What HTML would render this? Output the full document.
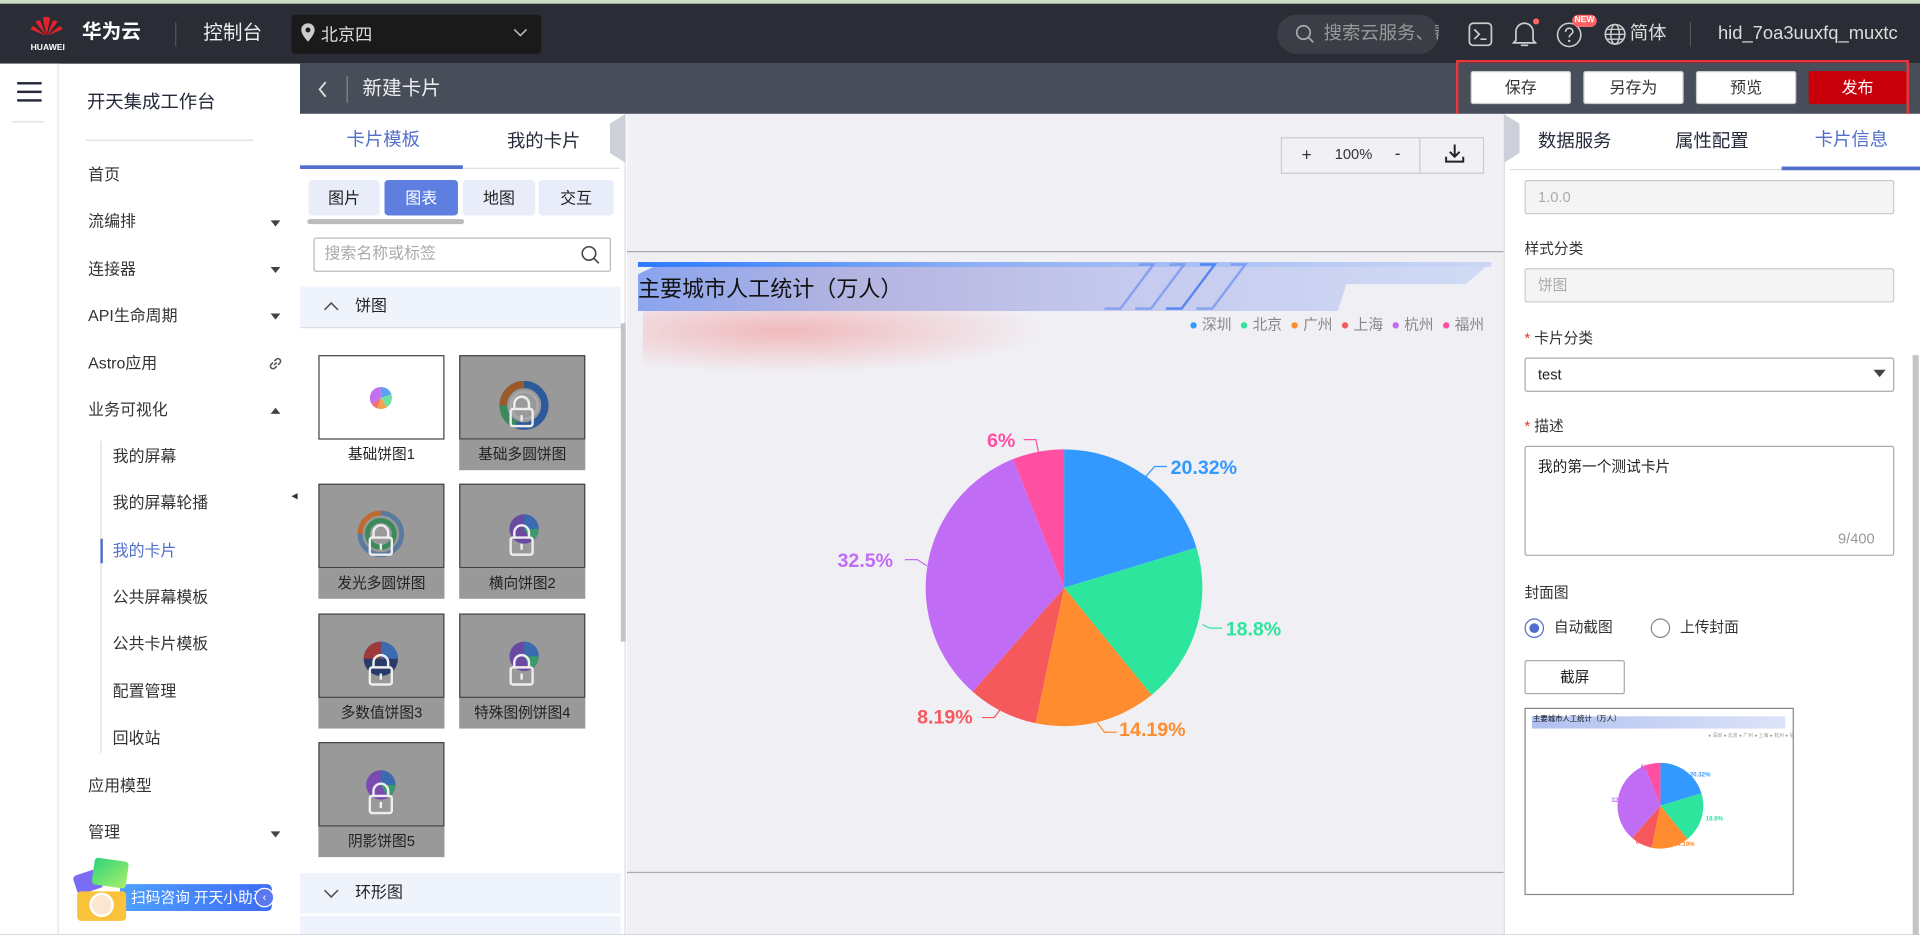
<!DOCTYPE html>
<html><head><meta charset="utf-8"><style>
*{box-sizing:border-box;margin:0;padding:0}
html,body{width:1920px;height:935px;overflow:hidden;background:#fff}
body{font-family:"Liberation Sans","Noto Sans CJK SC",sans-serif;}
#w{width:1568px;height:764px;transform:scale(1.22449);transform-origin:0 0;position:relative;overflow:hidden;background:#fff}
.a{position:absolute}
.t{position:absolute;white-space:nowrap;line-height:1.15}
.nav{font-size:13px;color:#333}
.tri{position:absolute;width:0;height:0;border-left:4px solid transparent;border-right:4px solid transparent;border-top:5px solid #444}
.btn{position:absolute;top:58px;height:27px;width:82px;background:#fff;border:1px solid #ccc;border-radius:2px;font-size:13px;color:#333;text-align:center;line-height:25px}
.th{position:absolute;width:103px;height:95px}
.th .b{position:absolute;left:0;top:0;width:103px;height:69px;border:1px solid #444;background:#fff}
.th .l{position:absolute;left:0;top:69px;width:103px;height:25px;text-align:center;line-height:25px;font-size:12px;color:#222}
.lk .b,.lk .l{background:#999}
.lock{position:absolute;left:41px;top:32px;width:20px;height:28px}
.in{position:absolute;left:1245px;width:302px;border:1px solid #ccc;border-radius:2px;font-size:12px;line-height:1.15}
.lab{position:absolute;left:1245px;font-size:12px;color:#333;line-height:1.15}
</style></head><body><div id="w">
<div class="a" style="left:0;top:0;width:1568px;height:3px;background:#c9dcc4"></div>
<div class="a" style="left:0;top:3px;width:1568px;height:49px;background:#2a2d35"></div>
<svg class="a" style="left:24px;top:13px" width="28" height="22" viewBox="0 0 28 22"><g fill="#e3222b"><path d="M14 16 L11 2 Q13 0 14 1Z"/><path d="M14 16 L17 2 Q15 0 14 1Z"/><path d="M13.5 16 L5 5 Q7 3 9 4Z"/><path d="M14.5 16 L23 5 Q21 3 19 4Z"/><path d="M13 16 L1 11 Q2 9 3 8Z"/><path d="M15 16 L27 11 Q26 9 25 8Z"/></g></svg>
<div class="t" style="left:25px;top:36px;font-size:7px;color:#fff;font-weight:bold">HUAWEI</div>
<div class="t" style="left:67px;top:18px;font-size:16px;color:#fff;font-weight:bold">华为云</div>
<div class="a" style="left:143px;top:18px;width:1px;height:20px;background:#555"></div>
<div class="t" style="left:166px;top:19px;font-size:16px;color:#eee">控制台</div>
<div class="a" style="left:238px;top:12px;width:204px;height:32px;background:#1a1a1a;border-radius:3px"></div>
<svg class="a" style="left:246px;top:19px" width="11" height="15" viewBox="0 0 11 15"><path d="M5.5 0C2.5 0 0 2.4 0 5.4 0 9.3 5.5 15 5.5 15S11 9.3 11 5.4C11 2.4 8.5 0 5.5 0zm0 7.5a2 2 0 110-4 2 2 0 010 4z" fill="#ccc"/></svg>
<div class="t" style="left:262px;top:20px;font-size:14px;color:#ddd">北京四</div>
<svg class="a" style="left:419px;top:23px" width="12" height="8"><path d="M1 1l5 5 5-5" stroke="#bbb" fill="none" stroke-width="1.3"/></svg>
<div class="a" style="left:1043px;top:12px;width:132px;height:32px;background:#3b3e46;border-radius:16px"></div>
<svg class="a" style="left:1058px;top:20px" width="15" height="16"><circle cx="6.5" cy="6.5" r="5.5" stroke="#aaa" stroke-width="1.4" fill="none"/><path d="M10.5 10.5l4 4" stroke="#aaa" stroke-width="1.4"/></svg>
<div class="t" style="left:1081px;top:19px;font-size:15px;color:#999;width:94px;overflow:hidden">搜索云服务、帮</div>
<svg class="a" style="left:1199px;top:18px" width="20" height="20"><rect x="1" y="1" width="18" height="18" rx="3" stroke="#ccc" stroke-width="1.4" fill="none"/><path d="M5 6l4 4-4 4M10 14h5" stroke="#ccc" stroke-width="1.4" fill="none"/></svg>
<svg class="a" style="left:1235px;top:16px" width="20" height="23"><path d="M3 17V10a7 7 0 0114 0v7l2 2H1z" stroke="#ccc" stroke-width="1.4" fill="none"/><path d="M7 21h6" stroke="#ccc" stroke-width="1.4"/></svg>
<div class="a" style="left:1252px;top:15px;width:5px;height:5px;border-radius:50%;background:#f66"></div>
<svg class="a" style="left:1271px;top:18px" width="21" height="21"><circle cx="10.5" cy="10.5" r="9.5" stroke="#ccc" stroke-width="1.3" fill="none"/><path d="M7.5 8a3 3 0 116 0c0 2-3 2-3 4.5" stroke="#ccc" stroke-width="1.3" fill="none"/><circle cx="10.5" cy="15.5" r="1" fill="#ccc"/></svg>
<div class="a" style="left:1284px;top:12px;width:20px;height:10px;background:#f66;border-radius:5px;font-size:7px;color:#fff;text-align:center;line-height:10px;font-weight:bold">NEW</div>
<svg class="a" style="left:1310px;top:19px" width="18" height="18"><circle cx="9" cy="9" r="8" stroke="#ccc" stroke-width="1.3" fill="none"/><ellipse cx="9" cy="9" rx="3.5" ry="8" stroke="#ccc" stroke-width="1.2" fill="none"/><path d="M1 9h16M2.5 5h13M2.5 13h13" stroke="#ccc" stroke-width="1.1"/></svg>
<div class="t" style="left:1331px;top:19px;font-size:15px;color:#ddd">简体</div>
<div class="a" style="left:1380px;top:18px;width:1px;height:20px;background:#555"></div>
<div class="t" style="left:1403px;top:19px;font-size:15px;color:#ddd">hid_7oa3uuxfq_muxtc</div>
<div class="a" style="left:245px;top:52px;width:1323px;height:41px;background:#484d5a"></div>
<svg class="a" style="left:259px;top:66px" width="9" height="14"><path d="M7 1L2 7l5 6" stroke="#ddd" stroke-width="1.5" fill="none"/></svg>
<div class="a" style="left:283px;top:62px;width:1px;height:22px;background:#888"></div>
<div class="t" style="left:296px;top:64px;font-size:16px;color:#eee">新建卡片</div>
<div class="btn" style="left:1201px">保存</div>
<div class="btn" style="left:1293px">另存为</div>
<div class="btn" style="left:1385px">预览</div>
<div class="btn" style="left:1477px;background:#c7000b;border-color:#c7000b;color:#fff;width:80px">发布</div>
<div class="a" style="left:1189px;top:49px;width:370px;height:55px;border:2px solid #e8363c"></div>
<div class="a" style="left:0;top:52px;width:48px;height:712px;background:#fff;border-right:1px solid #e4e4e4"></div>
<div class="a" style="left:14px;top:67px;width:20px;height:2px;background:#252b3a"></div>
<div class="a" style="left:14px;top:74px;width:20px;height:2px;background:#252b3a"></div>
<div class="a" style="left:14px;top:81px;width:20px;height:2px;background:#252b3a"></div>
<div class="a" style="left:10px;top:99px;width:26px;height:1px;background:#ddd"></div>
<div class="t" style="left:71px;top:75px;font-size:15px;color:#252b3a">开天集成工作台</div>
<div class="a" style="left:70px;top:114px;width:137px;height:1px;background:#ddd"></div>
<div class="t nav" style="left:72px;top:136px">首页</div>
<div class="t nav" style="left:72px;top:174px">流编排</div><div class="tri" style="left:221px;top:180px"></div>
<div class="t nav" style="left:72px;top:213px">连接器</div><div class="tri" style="left:221px;top:218px"></div>
<div class="t nav" style="left:72px;top:251px">API生命周期</div><div class="tri" style="left:221px;top:256px"></div>
<div class="t nav" style="left:72px;top:290px">Astro应用</div>
<svg class="a" style="left:219px;top:291px" width="12" height="12"><path d="M5 7l2-2M4 5L2.5 6.5a2 2 0 003 3L7 8M8 7l1.5-1.5a2 2 0 00-3-3L5 4" stroke="#555" stroke-width="1.3" fill="none"/></svg>
<div class="t nav" style="left:72px;top:328px">业务可视化</div><div class="tri" style="left:221px;top:333px;border-top:none;border-bottom:5px solid #444"></div>
<div class="a" style="left:82px;top:360px;width:1px;height:255px;background:#ddd"></div>
<div class="a" style="left:82px;top:440px;width:2px;height:20px;background:#526ecc"></div>
<div class="t nav" style="left:92px;top:366px">我的屏幕</div>
<div class="t nav" style="left:92px;top:404px">我的屏幕轮播</div>
<div class="t nav" style="left:92px;top:443px;color:#526ecc">我的卡片</div>
<div class="t nav" style="left:92px;top:481px">公共屏幕模板</div>
<div class="t nav" style="left:92px;top:519px">公共卡片模板</div>
<div class="t nav" style="left:92px;top:558px">配置管理</div>
<div class="t nav" style="left:92px;top:596px">回收站</div>
<div class="t nav" style="left:72px;top:635px">应用模型</div>
<div class="t nav" style="left:72px;top:673px">管理</div><div class="tri" style="left:221px;top:679px"></div>
<div class="a" style="left:98px;top:722px;width:124px;height:22px;background:linear-gradient(90deg,#4ea1ff,#3d6cf5);border-radius:0 4px 4px 0"></div>
<div class="t" style="left:107px;top:727px;font-size:12px;color:#fff">扫码咨询 开天小助手</div>
<div class="a" style="left:208px;top:725px;width:16px;height:16px;border-radius:50%;background:#5b78f0;border:1px solid #fff;color:#fff;font-size:9px;text-align:center;line-height:14px">&lsaquo;</div>
<div class="a" style="left:61px;top:712px;width:22px;height:16px;background:#7b6cf5;border-radius:3px;transform:rotate(-18deg)"></div>
<div class="a" style="left:76px;top:702px;width:28px;height:22px;background:linear-gradient(135deg,#2ed47a,#a8f06a);border-radius:3px;transform:rotate(8deg)"></div>
<div class="a" style="left:63px;top:728px;width:40px;height:24px;background:#fbc23b;border-radius:3px"></div>
<div class="a" style="left:73px;top:729px;width:20px;height:20px;background:#fde6d0;border-radius:50%;border:2px solid #fff"></div>
<div class="a" style="left:238px;top:400px;width:8px;height:16px;color:#333;font-size:10px">◂</div>
<div class="a" style="left:245px;top:93px;width:266px;height:671px;background:#fff;border-right:1px solid #ddd"></div>
<div class="t" style="left:283px;top:106px;font-size:15px;color:#526ecc">卡片模板</div>
<div class="t" style="left:414px;top:107px;font-size:15px;color:#252b3a">我的卡片</div>
<div class="a" style="left:245px;top:135px;width:133px;height:3px;background:#526ecc"></div>
<div class="a" style="left:378px;top:137px;width:128px;height:1px;background:#ddd"></div>
<div class="a" style="left:498px;top:93px;width:13px;height:40px;background:#cdd0d8;clip-path:polygon(100% 0,100% 100%,0 80%,0 20%)"></div>
<div class="a" style="left:252px;top:147px;width:58px;height:29px;background:#e8edf9;border-radius:3px;font-size:13px;text-align:center;line-height:29px;color:#222">图片</div>
<div class="a" style="left:314px;top:147px;width:60px;height:29px;background:#5f7fe0;border-radius:3px;font-size:13px;text-align:center;line-height:29px;color:#fff">图表</div>
<div class="a" style="left:378px;top:147px;width:59px;height:29px;background:#e8edf9;border-radius:3px;font-size:13px;text-align:center;line-height:29px;color:#222">地图</div>
<div class="a" style="left:440px;top:147px;width:61px;height:29px;background:#e8edf9;border-radius:3px;font-size:13px;text-align:center;line-height:29px;color:#222">交互</div>
<div class="a" style="left:251px;top:179px;width:128px;height:4px;background:#bbb;border-radius:2px"></div>
<div class="a" style="left:256px;top:194px;width:243px;height:28px;border:1px solid #bbb;border-radius:2px"></div>
<div class="t" style="left:265px;top:200px;font-size:13px;color:#aaa">搜索名称或标签</div>
<svg class="a" style="left:474px;top:200px" width="16" height="16"><circle cx="7" cy="7" r="5.5" stroke="#444" stroke-width="1.3" fill="none"/><path d="M11 11l4 4" stroke="#444" stroke-width="1.3"/></svg>
<div class="a" style="left:245px;top:234px;width:262px;height:34px;background:#eff3fb;border-bottom:1px solid #ddd"></div>
<svg class="a" style="left:264px;top:246px" width="13" height="8"><path d="M1 7l5.5-5.5L12 7" stroke="#555" stroke-width="1.3" fill="none"/></svg>
<div class="t" style="left:290px;top:243px;font-size:13px;color:#222">饼图</div>
<div class="a" style="left:507px;top:264px;width:4px;height:260px;background:#c4c4c4"></div>
<div class="th" style="left:260px;top:290px"><div class="b"><svg width="101" height="67"><path d="M50 25 A9 9 0 0 1 58.6 31 L50 34Z" fill="#5aa0f5"/><path d="M50 34 L58.6 31 A9 9 0 0 1 55 41.5Z" fill="#6de3a0"/><path d="M50 34 L55 41.5 A9 9 0 0 1 47 42.5Z" fill="#f5a04a"/><path d="M50 34 L47 42.5 A9 9 0 0 1 42.5 39Z" fill="#f07070"/><path d="M50 34 L42.5 39 A9 9 0 0 1 50 25Z" fill="#c070f0"/></svg></div><div class="l">基础饼图1</div></div>
<div class="th lk" style="left:375px;top:290px"><div class="b"><svg width="101" height="67"><circle cx="52" cy="40" r="17" stroke="#2d5a9a" stroke-width="6" fill="none"/><path d="M52 23 A17 17 0 0 0 35 40" stroke="#9a5a2a" stroke-width="6" fill="none"/><path d="M35 40 A17 17 0 0 0 45 56" stroke="#3a8a5a" stroke-width="6" fill="none"/><circle cx="52" cy="40" r="11" stroke="#aaa" stroke-width="2" fill="none"/></svg></div><div class="l">基础多圆饼图</div><svg class="lock" viewBox="0 0 20 28"><path d="M4 12V8a6 6 0 0112 0v4" stroke="#eee" stroke-width="2" fill="none"/><rect x="1" y="12" width="18" height="14" rx="2" stroke="#eee" stroke-width="2" fill="none"/><path d="M10 17v5" stroke="#eee" stroke-width="2"/></svg></div>
<div class="th lk" style="left:260px;top:395px"><div class="b"><svg width="101" height="67"><circle cx="50" cy="40" r="17" stroke="#5a7aa0" stroke-width="4" fill="none"/><path d="M50 23 A17 17 0 0 0 33 40" stroke="#c06a30" stroke-width="4" fill="none"/><circle cx="50" cy="40" r="11" stroke="#3a8a5a" stroke-width="4" fill="none"/></svg></div><div class="l">发光多圆饼图</div><svg class="lock" viewBox="0 0 20 28"><path d="M4 12V8a6 6 0 0112 0v4" stroke="#eee" stroke-width="2" fill="none"/><rect x="1" y="12" width="18" height="14" rx="2" stroke="#eee" stroke-width="2" fill="none"/><path d="M10 17v5" stroke="#eee" stroke-width="2"/></svg></div>
<div class="th lk" style="left:375px;top:395px"><div class="b"><svg width="101" height="67"><circle cx="52" cy="36" r="12" fill="#6a4aa0"/><path d="M52 24 A12 12 0 0 1 64 36 L52 36Z" fill="#3a6ab0"/><path d="M52 36 L64 36 A12 12 0 0 1 58 46Z" fill="#3a9a6a"/></svg></div><div class="l">横向饼图2</div><svg class="lock" viewBox="0 0 20 28"><path d="M4 12V8a6 6 0 0112 0v4" stroke="#eee" stroke-width="2" fill="none"/><rect x="1" y="12" width="18" height="14" rx="2" stroke="#eee" stroke-width="2" fill="none"/><path d="M10 17v5" stroke="#eee" stroke-width="2"/></svg></div>
<div class="th lk" style="left:260px;top:501px"><div class="b"><svg width="101" height="67"><circle cx="50" cy="36" r="14" fill="#2a3a6a"/><path d="M50 22 A14 14 0 0 1 64 36 L50 36Z" fill="#3a6ab0"/><path d="M50 36 L36 36 A14 14 0 0 1 50 22Z" fill="#a03a3a"/></svg></div><div class="l">多数值饼图3</div><svg class="lock" viewBox="0 0 20 28"><path d="M4 12V8a6 6 0 0112 0v4" stroke="#eee" stroke-width="2" fill="none"/><rect x="1" y="12" width="18" height="14" rx="2" stroke="#eee" stroke-width="2" fill="none"/><path d="M10 17v5" stroke="#eee" stroke-width="2"/></svg></div>
<div class="th lk" style="left:375px;top:501px"><div class="b"><svg width="101" height="67"><circle cx="52" cy="34" r="12" fill="#6a4aa0"/><path d="M52 22 A12 12 0 0 1 64 34 L52 34Z" fill="#3a6ab0"/><path d="M52 34 L64 34 A12 12 0 0 1 58 44Z" fill="#3a9a6a"/></svg></div><div class="l">特殊图例饼图4</div><svg class="lock" viewBox="0 0 20 28"><path d="M4 12V8a6 6 0 0112 0v4" stroke="#eee" stroke-width="2" fill="none"/><rect x="1" y="12" width="18" height="14" rx="2" stroke="#eee" stroke-width="2" fill="none"/><path d="M10 17v5" stroke="#eee" stroke-width="2"/></svg></div>
<div class="th lk" style="left:260px;top:606px"><div class="b"><svg width="101" height="67"><circle cx="50" cy="34" r="12" fill="#7a4ab0"/><path d="M50 22 A12 12 0 0 1 62 34 L50 34Z" fill="#3a6ab0"/><path d="M50 34 L62 34 A12 12 0 0 1 56 44Z" fill="#3a9a6a"/></svg></div><div class="l">阴影饼图5</div><svg class="lock" viewBox="0 0 20 28"><path d="M4 12V8a6 6 0 0112 0v4" stroke="#eee" stroke-width="2" fill="none"/><rect x="1" y="12" width="18" height="14" rx="2" stroke="#eee" stroke-width="2" fill="none"/><path d="M10 17v5" stroke="#eee" stroke-width="2"/></svg></div>
<div class="a" style="left:245px;top:713px;width:262px;height:33px;background:#eff3fb"></div>
<svg class="a" style="left:264px;top:726px" width="13" height="8"><path d="M1 1l5.5 5.5L12 1" stroke="#555" stroke-width="1.3" fill="none"/></svg>
<div class="t" style="left:290px;top:722px;font-size:13px;color:#222">环形图</div>
<div class="a" style="left:245px;top:748px;width:262px;height:16px;background:#eff3fb"></div>
<div class="a" style="left:512px;top:93px;width:716px;height:671px;background:#f0f0f5"></div>
<div class="a" style="left:1046px;top:112px;width:166px;height:30px;border:1px solid #ccc;background:#f0f0f5"></div>
<div class="a" style="left:1159px;top:112px;width:1px;height:30px;background:#ccc"></div>
<div class="t" style="left:1063px;top:118px;font-size:14px;color:#333">+</div>
<div class="t" style="left:1090px;top:120px;font-size:12px;color:#333">100%</div>
<div class="t" style="left:1139px;top:117px;font-size:14px;color:#333">-</div>
<svg class="a" style="left:1180px;top:117px" width="16" height="17"><path d="M8 1v10M4 7l4 4 4-4M1 11v4h14v-4" stroke="#222" stroke-width="1.6" fill="none"/></svg>
<div class="a" style="left:512px;top:205px;width:716px;height:508px;border-top:1px solid #aaa;border-bottom:1px solid #aaa;background:#f0eff4"></div>
<div class="a" style="left:525px;top:235px;width:330px;height:70px;background:radial-gradient(ellipse at 35% 50%,rgba(240,120,120,.45),rgba(240,150,150,0) 70%)"></div>
<div class="a" style="left:521px;top:214px;width:697px;height:40px;background:linear-gradient(90deg,#8aa4ef,#b4b4e0 25%,#c6cbef 60%,#d0dbf5);clip-path:polygon(3% 0,100% 0,97% 45%,83% 45%,82% 100%,0 100%,0 25%)"></div>
<div class="a" style="left:521px;top:214px;width:697px;height:4px;background:linear-gradient(90deg,#2a7aff,#8fb0f5 40%,#ccd7f5)"></div>
<svg class="a" style="left:890px;top:214px" width="140" height="40"><g stroke="#6a90f0" stroke-width="2" fill="none" opacity=".7"><path d="M40 2h12L25 38H12"/><path d="M65 2h12L50 38H37"/><path d="M90 2h12L75 38H62" stroke="#2a6af0"/><path d="M115 2h12L100 38H87"/></g></svg>
<div class="t" style="left:521px;top:226px;font-size:18px;color:#111">主要城市人工统计（万人）</div>
<div class="t" style="right:356px;top:259px;font-size:12px;color:#888;text-align:right">
<span style="color:#3399ff">●</span> 深圳 &nbsp;<span style="color:#2ee59d">●</span> 北京 &nbsp;<span style="color:#ff8c2e">●</span> 广州 &nbsp;<span style="color:#f5595c">●</span> 上海 &nbsp;<span style="color:#c16cf5">●</span> 杭州 &nbsp;<span style="color:#ff4fa3">●</span> 福州</div>
<svg class="a" style="left:512px;top:93px" width="716" height="671" viewBox="512 93 716 671">
<path d="M869 480L869 367A113 113 0 0 1 977.1 447.2Z" fill="#3399ff"/>
<path d="M869 480L977.1 447.2A113 113 0 0 1 940.4 567.6Z" fill="#2ee59d"/>
<path d="M869 480L940.4 567.6A113 113 0 0 1 845.7 590.6Z" fill="#ff8c2e"/>
<path d="M869 480L845.7 590.6A113 113 0 0 1 794.3 564.8Z" fill="#f5595c"/>
<path d="M869 480L794.3 564.8A113 113 0 0 1 827.4 374.9Z" fill="#c16cf5"/>
<path d="M869 480L827.4 374.9A113 113 0 0 1 869 367Z" fill="#ff4fa3"/>
<g fill="none" stroke-width="1"><path d="M935 390l8-9h10" stroke="#3399ff"/><path d="M982 510l6 3h10" stroke="#2ee59d"/><path d="M896 590l6 8h10" stroke="#ff8c2e"/><path d="M818 578l-6 8h-10" stroke="#f5595c"/><path d="M757 462l-8-5h-10" stroke="#c16cf5"/><path d="M848 369l-2-10h-10" stroke="#ff4fa3"/></g>
<g font-family="Liberation Sans" font-size="16" font-weight="bold"><text x="956" y="387" fill="#3399ff">20.32%</text><text x="1001" y="519" fill="#2ee59d">18.8%</text><text x="914" y="601" fill="#ff8c2e">14.19%</text><text x="749" y="591" fill="#f5595c">8.19%</text><text x="684" y="463" fill="#c16cf5">32.5%</text><text x="806" y="365" fill="#ff4fa3">6%</text></g>
</svg>
<div class="a" style="left:1228px;top:93px;width:340px;height:671px;background:#fff;border-left:1px solid #ddd"></div>
<div class="a" style="left:1228px;top:93px;width:13px;height:40px;background:#cdd0d8;clip-path:polygon(0 0,100% 20%,100% 80%,0 100%)"></div>
<div class="t" style="left:1256px;top:107px;font-size:15px;color:#252b3a">数据服务</div>
<div class="t" style="left:1368px;top:107px;font-size:15px;color:#252b3a">属性配置</div>
<div class="t" style="left:1482px;top:106px;font-size:15px;color:#526ecc">卡片信息</div>
<div class="a" style="left:1233px;top:138px;width:335px;height:1px;background:#ddd"></div>
<div class="a" style="left:1455px;top:136px;width:113px;height:3px;background:#526ecc"></div>
<div class="a" style="left:1562px;top:290px;width:5px;height:474px;background:#c4c4c4"></div>
<div class="in" style="top:147px;height:28px;background:#f4f4f4;color:#aaa;padding:7px 10px">1.0.0</div>
<div class="lab" style="top:197px">样式分类</div>
<div class="in" style="top:219px;height:28px;background:#f4f4f4;color:#aaa;padding:7px 10px">饼图</div>
<div class="lab" style="top:270px"><span style="color:#e33">*</span> 卡片分类</div>
<div class="in" style="top:292px;height:28px;color:#222;padding:7px 10px;border-color:#aaa">test</div>
<div class="tri" style="left:1530px;top:302px;border-left-width:5px;border-right-width:5px;border-top-width:6px"></div>
<div class="lab" style="top:342px"><span style="color:#e33">*</span> 描述</div>
<div class="in" style="top:364px;height:90px;color:#222;padding:10px 10px;border-color:#aaa">我的第一个测试卡片</div>
<div class="t" style="left:1501px;top:434px;font-size:12px;color:#999">9/400</div>
<div class="lab" style="top:478px">封面图</div>
<div class="a" style="left:1245px;top:505px;width:16px;height:16px;border-radius:50%;border:1px solid #526ecc"></div>
<div class="a" style="left:1249px;top:509px;width:8px;height:8px;border-radius:50%;background:#526ecc"></div>
<div class="t" style="left:1269px;top:506px;font-size:12px;color:#333">自动截图</div>
<div class="a" style="left:1348px;top:505px;width:16px;height:16px;border-radius:50%;border:1px solid #888"></div>
<div class="t" style="left:1372px;top:506px;font-size:12px;color:#333">上传封面</div>
<div class="a" style="left:1245px;top:539px;width:82px;height:28px;border:1px solid #aaa;border-radius:2px;font-size:12px;text-align:center;line-height:26px;color:#222">截屏</div>
<div class="a" style="left:1245px;top:578px;width:220px;height:153px;border:1px solid #888;background:#fff"></div>
<div class="a" style="left:1251px;top:585px;width:207px;height:10px;background:linear-gradient(90deg,#b0c0f0,#dde4f8)"></div>
<div class="t" style="left:1252px;top:585px;font-size:6px;color:#111">主要城市人工统计（万人）</div>
<svg class="a" style="left:1245px;top:578px" width="220" height="153" viewBox="0 0 220 153">
<g font-size="4" fill="#999"><text x="150" y="24">● 深圳 ● 北京 ● 广州 ● 上海 ● 杭州 ● 福州</text></g>
<g transform="translate(111,80) scale(0.31)">
<path d="M0 0L0 -113A113 113 0 0 1 108.1 -32.8Z" fill="#3399ff"/>
<path d="M0 0L108.1 -32.8A113 113 0 0 1 71.4 87.6Z" fill="#2ee59d"/>
<path d="M0 0L71.4 87.6A113 113 0 0 1 -23.3 110.6Z" fill="#ff8c2e"/>
<path d="M0 0L-23.3 110.6A113 113 0 0 1 -74.7 84.8Z" fill="#f5595c"/>
<path d="M0 0L-74.7 84.8A113 113 0 0 1 -41.6 -105.1Z" fill="#c16cf5"/>
<path d="M0 0L-41.6 -105.1A113 113 0 0 1 0 -113Z" fill="#ff4fa3"/>
</g>
<g font-size="5" font-weight="bold" font-family="Liberation Sans"><text x="135" y="56" fill="#3399ff">20.32%</text><text x="148" y="92" fill="#2ee59d">18.8%</text><text x="122" y="113" fill="#ff8c2e">14.19%</text><text x="91" y="111" fill="#f5595c">8.19%</text><text x="71" y="77" fill="#c16cf5">32.5%</text><text x="95" y="50" fill="#ff4fa3">6%</text></g>
</svg>
<div class="a" style="left:0;top:763px;width:1568px;height:1px;background:#ccc"></div>
</div></body></html>
